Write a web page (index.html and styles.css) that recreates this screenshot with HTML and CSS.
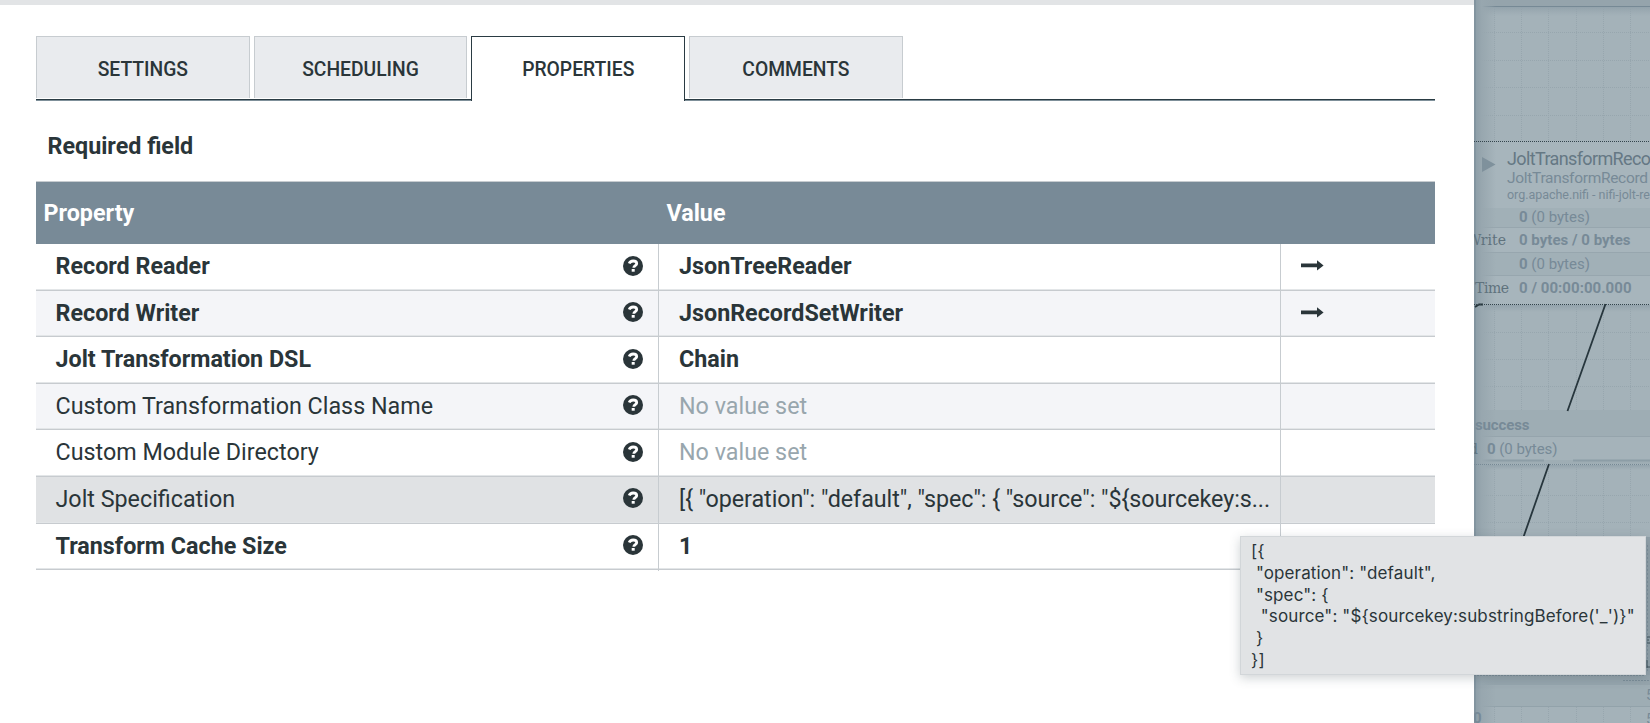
FILE: index.html
```html
<!DOCTYPE html>
<html lang="en">
<head>
<meta charset="utf-8">
<title>Configure Processor</title>
<link rel="stylesheet" href="styles.css">
</head>
<body>
<svg class="symbols" width="0" height="0">
  <symbol id="help" viewBox="0 0 20 20">
    <circle cx="10" cy="10" r="10" fill="#2a3539"/>
    <path d="M6.200 7.600C6.900 5.700 8.300 5 10.100 5c2.200 0 3.600 1.100 3.600 2.700 0 1.900-2.900 2.100-2.900 4" fill="none" stroke="#fff" stroke-width="2.800"/>
    <rect x="8.700" y="13" width="3" height="2.700" fill="#fff"/>
  </symbol>
  <symbol id="goto" viewBox="0 0 23 11">
    <path d="M0 3.500h16V0.200l6.600 5.200-6.600 5.200V7.300H0z" fill="#2a3539"/>
  </symbol>
</svg>
<div class="screen">
  <main class="dialog">
    <div class="titlebar"></div>
    <nav class="tabs">
      <div class="tab">SETTINGS</div>
      <div class="tab">SCHEDULING</div>
      <div class="tab active">PROPERTIES</div>
      <div class="tab">COMMENTS</div>
    </nav>
    <div class="legend">Required field</div>
    <section class="grid">
      <div class="row head"><div>Property</div><div>Value</div></div>
      <div class="row req"><div class="name">Record Reader<svg class="help"><use href="#help"/></svg></div><div class="value"><span>JsonTreeReader</span></div><div class="act"><svg class="goto"><use href="#goto"/></svg></div></div>
      <div class="row req odd"><div class="name">Record Writer<svg class="help"><use href="#help"/></svg></div><div class="value"><span>JsonRecordSetWriter</span></div><div class="act"><svg class="goto"><use href="#goto"/></svg></div></div>
      <div class="row req"><div class="name">Jolt Transformation DSL<svg class="help"><use href="#help"/></svg></div><div class="value"><span>Chain</span></div><div class="act"></div></div>
      <div class="row odd"><div class="name">Custom Transformation Class Name<svg class="help"><use href="#help"/></svg></div><div class="value unset"><span>No value set</span></div><div class="act"></div></div>
      <div class="row"><div class="name">Custom Module Directory<svg class="help"><use href="#help"/></svg></div><div class="value unset"><span>No value set</span></div><div class="act"></div></div>
      <div class="row hover"><div class="name">Jolt Specification<svg class="help"><use href="#help"/></svg></div><div class="value spec"><span>[{ "operation": "default", "spec": { "source": "${sourcekey:s...</span></div><div class="act"></div></div>
      <div class="row req"><div class="name">Transform Cache Size<svg class="help"><use href="#help"/></svg></div><div class="value"><span>1</span></div><div class="act"></div></div>
    </section>
  </main>
  <aside class="canvas">
    <svg class="flow" width="176" height="723" viewBox="1474 0 176 723">
      <defs>
        <linearGradient id="side"><stop offset="0" stop-color="#8b9ca6"/><stop offset=".35" stop-color="#98a7af"/><stop offset="1" stop-color="#97a6ae" stop-opacity="0"/></linearGradient>
        <linearGradient id="top" x2="0" y2="1"><stop offset="0" stop-color="#93a3ac"/><stop offset="1" stop-color="#97a6ae" stop-opacity="0"/></linearGradient>
      </defs>
      <rect x="1474" width="176" height="723" fill="#a4b2b9"/>
      <path class="gridline" d="M1494.500 7V723M1521.500 7V723M1548.500 7V723M1576.500 7V723M1603.500 7V723M1630.500 7V723M1474 32.500h176M1474 60.500h176M1474 87.500h176M1474 115.500h176M1474 332.500h176M1474 359.500h176M1474 386.500h176M1474 495.500h176M1474 522.500h176"/>
      <rect x="1474" width="176" height="6" fill="#95a4ac"/>
      <path d="M1474 6.500h176" stroke="#768995"/>
      <rect x="1474" y="7" width="176" height="9" fill="url(#top)"/>
      <rect x="1474" y="141" width="176" height="163" fill="#a7b5bc"/>
      <path d="M1474 208h176v19h-176zM1474 253h176v22h-176z" fill="#a1b0b7"/>
      <path d="M1474 227.500h176M1474 252.500h176M1474 275.500h176" stroke="#97a6ae"/>
      <rect x="1474" y="305" width="176" height="7" fill="url(#top)"/>
      <rect x="1474" y="410" width="176" height="54" fill="#9eadb4"/>
      <rect x="1474" y="437" width="176" height="23" fill="#a5b3ba"/>
      <path d="M1474 436.500h176" stroke="#95a4ac"/>
      <path d="M1474 460.500h70M1573 460.500h77" stroke="#8c9da6" stroke-width="2"/>
      <rect x="1474" y="465" width="176" height="5" fill="url(#top)"/>
      <rect x="1645" y="537" width="5" height="140" fill="#91a0a9"/>
      <rect x="1474" y="675" width="176" height="10" fill="#96a5ad"/>
      <rect x="1474" y="685" width="176" height="21" fill="#9eadb4"/>
      <path d="M1474 706.500h176" stroke="#92a2aa"/>
      <rect x="1474" width="22" height="723" fill="url(#side)"/>
      <path d="M1475 0v723" stroke="#788b97"/>
      <path d="M1474 464.500h176" stroke="#768995" stroke-dasharray="1 1"/>
      <path d="M1647.500 545v128" stroke="#7e909b" stroke-dasharray="2 2"/>
      <path d="M1647 637h3M1647 640h2M1647 643h3M1647 660v8M1647 667h3" stroke="#3f5059"/>
      <path d="M1623 680.500h27M1474 675.500h171" stroke="#7b8d98" stroke-dasharray="2 1"/>
      <path d="M1475 307l4-2.500h4M1605.500 304l-38 107M1549 464L1523.500 537" fill="none" stroke="#27363d" stroke-width="1.800"/>
      <path class="edge" d="M1474 141.500h176M1474 304.500h176"/>
      <path d="M1482 157l13.500 7.500-13.500 7.500z" fill="#7f919c"/>
      <text class="label title" x="1507" y="164.500" font-size="18" textLength="144">JoltTransformReco</text>
      <text class="label" x="1507" y="182.500" font-size="15.500" textLength="141">JoltTransformRecord</text>
      <text class="label" x="1507" y="199" font-size="12.500" textLength="143">org.apache.nifi - nifi-jolt-re</text>
      <text class="label" x="1519" y="222" font-size="15" textLength="71"><tspan class="b">0</tspan> (0 bytes)</text>
      <text class="label b" x="1519" y="245" font-size="15" textLength="111.500">0 bytes / 0 bytes</text>
      <text class="label" x="1519" y="269" font-size="15" textLength="71"><tspan class="b">0</tspan> (0 bytes)</text>
      <text class="label b" x="1519" y="293" font-size="15" textLength="112.500">0 / 00:00:00.000</text>
      <text class="serif" x="1467" y="245" textLength="39">Write</text>
      <text class="serif" x="1475" y="293" textLength="34">Time</text>
      <text class="label b" x="1475" y="430" font-size="15" textLength="54.500">success</text>
      <text class="serif" x="1478" y="454" text-anchor="end">d</text>
      <text class="label" x="1487" y="454" font-size="15" textLength="70.500"><tspan class="b">0</tspan> (0 bytes)</text>
      <text class="label b" x="1473" y="723" font-size="15">0</text>
      <text class="label" x="1646" y="700" font-size="15">5</text>
      <text class="label" x="1646" y="724" font-size="15">5</text>
    </svg>
  </aside>
  <div class="tooltip">[{
 "operation": "default",
 "spec": {
  "source": "${sourcekey:substringBefore('_')}"
 }
}]</div>
</div>
</body>
</html>
```
FILE: styles.css
```css
body { margin: 0; font-family: Roboto, sans-serif; color: #2a3539; }
.symbols { position: absolute; }
.screen { position: relative; display: flex; width: 1650px; height: 723px; overflow: hidden; background: #fff; }
.dialog { width: 1474px; flex: none; box-sizing: border-box; }
.titlebar { height: 5px; background: #e2e4e6; }
.tabs { display: flex; gap: 4px; height: 64px; margin: 31px 39px 1px 36px; border-bottom: 1px solid #2a3b43; box-shadow: 0 1px #7f909a; box-sizing: border-box; }
.tab { width: 213.700px; height: 62px; box-sizing: border-box; border: 1px solid #c7ccd0; border-width: 1px 1px 0; background: #e9ebee; font-size: 19.300px; font-weight: 500; line-height: 66px; text-align: center; }
.tab.active { height: 65px; border-color: #2a3b43; background: #fff; }
.legend { height: 80px; padding-left: 47.500px; line-height: 90px; font-size: 23.300px; font-weight: 700; }
.grid { width: 1399px; margin-left: 36px; border-top: 1px solid #c7ccd0; font-size: 23.300px; }
.row { display: grid; grid-template-columns: 623px 622px 154px; height: 46.600px; box-sizing: border-box; border-bottom: 1px solid #c7cbcf; box-shadow: inset 0 -1px #e3e6e8; line-height: 45px; white-space: nowrap; }
.row.head { height: 62px; border: 0; box-shadow: none; background: #788a97; color: #fff; font-weight: 700; line-height: 62px; }
.head div { padding-left: 7.500px; }
.odd { background: #f4f5f8; }
.hover { background: #e0e2e4; }
.req { font-weight: 700; }
.name { display: flex; justify-content: space-between; align-items: center; padding: 0 15.500px 2px 19.500px; border-right: 1px solid #c7ccd0; }
.value { padding-left: 20px; border-right: 1px solid #c7ccd0; }
.unset { color: #98a6ad; }
.spec { letter-spacing: -.04px; }
.help { width: 20px; height: 20px; margin-top: -2px; }
.goto { width: 23px; height: 11px; }
.act { display: flex; align-items: center; padding: 0 0 4px 20px; }
.canvas { flex: 1; overflow: hidden; }
.flow { display: block; }
.gridline { stroke: #97a6ae; stroke-dasharray: 1 1; fill: none; }
.edge { stroke: #33444c; stroke-dasharray: 1 1; }
.label { font-family: Roboto, sans-serif; fill: #778a97; }
.title { fill: #657884; }
.b { font-weight: 700; }
.serif { font-family: "DejaVu Serif", serif; font-size: 14px; fill: #5f727d; }
.tooltip { position: absolute; left: 1240px; top: 536px; width: 406px; height: 139px; box-sizing: border-box; padding: 4px 0 0 10px; background: #e1e3e5; border: 1px solid #d2d6d9; box-shadow: 0 3px 10px rgba(60, 75, 85, .25); font: 17px/21.800px Inter, sans-serif; letter-spacing: .13px; white-space: pre; }
```
